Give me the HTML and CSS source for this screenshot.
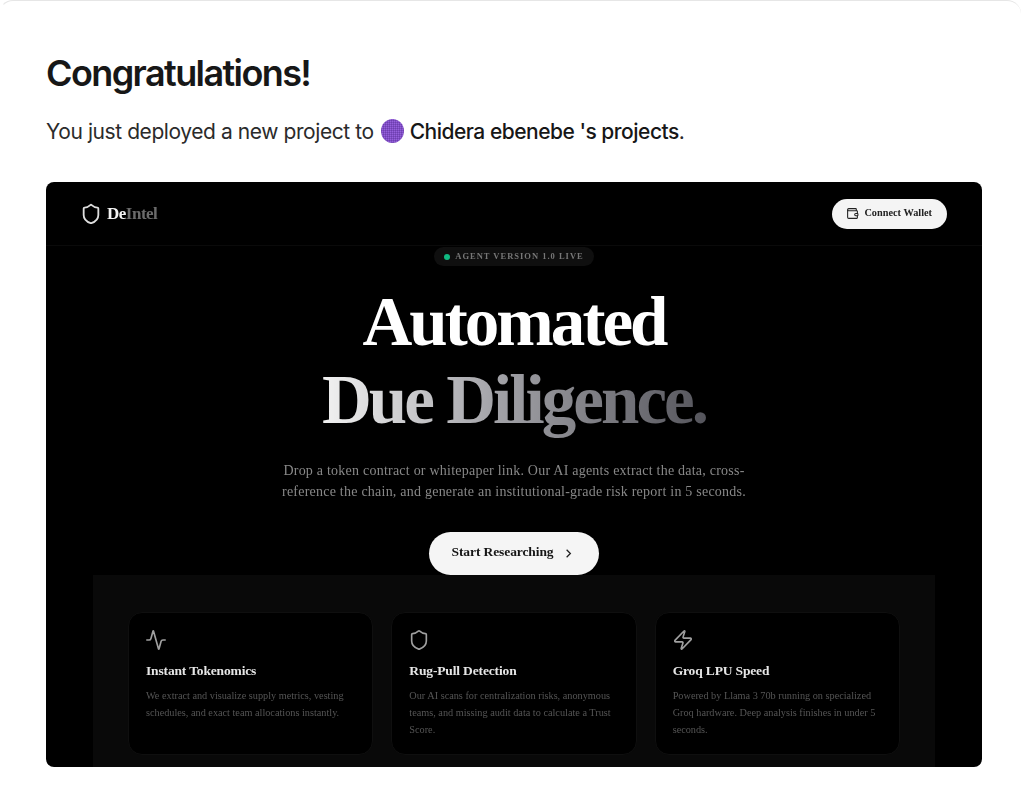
FILE: index.html
```html
<!DOCTYPE html>
<html lang="en">
<head>
  <meta charset="UTF-8">
  <meta name="viewport" content="width=device-width, initial-scale=1.0">
  <title>Congratulations!</title>
  <link rel="stylesheet" href="styles.css">
</head>
<body>
  <div class="panel">
    <h1 class="title">Congratulations!</h1>
    <p class="subtitle">You just deployed a new project to <span class="avatar"></span> <span class="team">Chidera ebenebe 's projects</span>.</p>

    <div class="preview">
      <div class="nav">
        <div class="logo">
          <svg class="logo-icon" viewBox="0 0 24 24"><path d="M20 13c0 5-3.5 7.5-7.66 8.95a1 1 0 0 1-.67-.01C7.5 20.5 4 18 4 13V6a1 1 0 0 1 1-1c2 0 4.5-1.2 6.24-2.72a1.17 1.17 0 0 1 1.52 0C14.51 3.81 17 5 19 5a1 1 0 0 1 1 1z"/></svg>
          <span class="logo-text">De<span class="logo-dim">Intel</span></span>
        </div>
        <div class="wallet-btn">
          <svg class="wallet-icon" viewBox="0 0 24 24"><path d="M19 7V4a1 1 0 0 0-1-1H5a2 2 0 0 0 0 4h15a1 1 0 0 1 1 1v4h-3a2 2 0 0 0 0 4h3a1 1 0 0 0 1-1v-2a1 1 0 0 0-1-1"/><path d="M3 5v14a2 2 0 0 0 2 2h15a1 1 0 0 0 1-1v-4"/></svg>
          <span class="wallet-label">Connect Wallet</span>
        </div>
      </div>

      <div class="hero">
        <div class="badge"><span class="dot"></span><span class="badge-label">AGENT VERSION 1.0 LIVE</span></div>
        <div class="headline">
          <div>Automated</div>
          <div class="gradient">Due Diligence.</div>
        </div>
        <p class="lead">Drop a token contract or whitepaper link. Our AI agents extract the data, cross-<br>reference the chain, and generate an institutional-grade risk report in 5 seconds.</p>
        <div class="start-btn">
          <span class="start-label">Start Researching</span>
          <svg class="chevron" viewBox="0 0 24 24"><path d="m9 18 6-6-6-6"/></svg>
        </div>
      </div>

      <div class="features">
        <div class="card">
          <svg class="card-icon" viewBox="0 0 24 24"><path d="M22 12h-2.48a2 2 0 0 0-1.93 1.46l-2.35 8.36a.25.25 0 0 1-.48 0L9.24 2.18a.25.25 0 0 0-.48 0l-2.35 8.36A2 2 0 0 1 4.49 12H2"/></svg>
          <div class="card-title">Instant Tokenomics</div>
          <div class="card-text">We extract and visualize supply metrics, vesting schedules, and exact team allocations instantly.</div>
        </div>
        <div class="card">
          <svg class="card-icon" viewBox="0 0 24 24"><path d="M20 13c0 5-3.5 7.5-7.66 8.95a1 1 0 0 1-.67-.01C7.5 20.5 4 18 4 13V6a1 1 0 0 1 1-1c2 0 4.5-1.2 6.24-2.72a1.17 1.17 0 0 1 1.52 0C14.51 3.81 17 5 19 5a1 1 0 0 1 1 1z"/></svg>
          <div class="card-title">Rug-Pull Detection</div>
          <div class="card-text">Our AI scans for centralization risks, anonymous teams, and missing audit data to calculate a Trust Score.</div>
        </div>
        <div class="card">
          <svg class="card-icon" viewBox="0 0 24 24"><path d="M4 14a1 1 0 0 1-.78-1.63l9.9-10.2a.5.5 0 0 1 .86.46l-1.92 6.02A1 1 0 0 0 13 10h7a1 1 0 0 1 .78 1.63l-9.9 10.2a.5.5 0 0 1-.86-.46l1.92-6.02A1 1 0 0 0 11 14z"/></svg>
          <div class="card-title">Groq LPU Speed</div>
          <div class="card-text">Powered by Llama 3 70b running on specialized Groq hardware. Deep analysis finishes in under 5 seconds.</div>
        </div>
      </div>
    </div>
  </div>
</body>
</html>
```

FILE: styles.css
```css
html, body {
  margin: 0;
  padding: 0;
  height: 100%;
  background-color: #fff;
  overflow: hidden;
}
.panel {
  height: 785px;
  box-sizing: border-box;
  padding: 50px 39px 0 46px;
  border-top: 1px solid #e6e6e6;
  border-left: 1px solid transparent;
  border-radius: 14px 14px 0 0;
  margin-left: -1px;
  font-family: Inter, "Liberation Sans", sans-serif;
  color: #171717;
}
.title {
  margin: 0;
  font-size: 36px;
  line-height: 44px;
  font-weight: 600;
  letter-spacing: -1.6px;
}
.subtitle {
  display: flex;
  align-items: center;
  gap: 6px;
  margin: 22px 0 0;
  height: 28px;
  font-size: 21px;
  letter-spacing: -0.42px;
  color: #2b2b2b;
}
.avatar {
  width: 23px;
  height: 24px;
  margin-left: 1px;
  border-radius: 50%;
  background-color: #9560dc;
  background-image:
    repeating-linear-gradient(0deg, rgba(60, 20, 120, 0.25) 0 1px, transparent 1px 2px),
    repeating-linear-gradient(90deg, rgba(60, 20, 120, 0.25) 0 1px, transparent 1px 2px);
}
.team {
  font-weight: 500;
  letter-spacing: -0.5px;
  color: #171717;
  margin-right: -6px;
}
.preview {
  margin-top: 37px;
  width: 936px;
  height: 585px;
  border-radius: 8px;
  overflow: hidden;
  background-color: #000;
  font-family: "Liberation Serif", serif;
  filter: blur(0.35px);
}
.nav {
  display: flex;
  justify-content: space-between;
  align-items: center;
  height: 64px;
  box-sizing: border-box;
  padding: 0 35px 0 34px;
  border-bottom: 1px solid #0a0a0a;
}
.logo {
  display: flex;
  align-items: center;
  gap: 5px;
}
.logo-icon {
  width: 22px;
  height: 22px;
  fill: none;
  stroke: #dedede;
  stroke-width: 2;
}
.logo-text {
  font-size: 17px;
  font-weight: bold;
  letter-spacing: -0.5px;
  color: #f2f2f2;
}
.logo-dim {
  color: #6b6b6b;
}
.wallet-btn {
  display: flex;
  align-items: center;
  gap: 5px;
  height: 30px;
  padding: 0 15px 0 14px;
  border-radius: 15px;
  background-color: #f4f4f4;
  font-size: 10.3px;
  font-weight: bold;
  color: #222;
}
.wallet-label {
  margin-bottom: 2px;
}
.wallet-icon {
  width: 13px;
  height: 13px;
  fill: none;
  stroke: #222;
  stroke-width: 2;
}
.hero {
  display: flex;
  flex-direction: column;
  align-items: center;
}
.badge {
  display: flex;
  align-items: center;
  gap: 5px;
  height: 19px;
  margin-top: 1px;
  padding: 0 10px;
  border-radius: 10px;
  background-color: #0f0f0f;
  font-size: 8.5px;
  font-weight: bold;
  letter-spacing: 1px;
  color: #777;
}
.badge-label {
  margin-bottom: 2px;
}
.dot {
  width: 6px;
  height: 6px;
  border-radius: 50%;
  background-color: #10b981;
}
.headline {
  margin-top: 17px;
  font-size: 69px;
  line-height: 78px;
  font-weight: bold;
  letter-spacing: -2.95px;
  text-align: center;
  color: #fff;
}
.gradient {
  background-image: linear-gradient(90deg, #f2f2f2 0%, #a3a3a8 45%, #55555c 100%);
  -webkit-background-clip: text;
  background-clip: text;
  color: transparent;
}
.lead {
  margin: 22px 0 0;
  font-size: 14px;
  line-height: 20.5px;
  letter-spacing: 0.23px;
  text-align: center;
  color: #888;
}
.start-btn {
  display: flex;
  align-items: center;
  gap: 8px;
  height: 43px;
  margin-top: 30px;
  padding: 0 23px;
  border-radius: 22px;
  background-color: #f5f5f5;
  font-size: 13.5px;
  font-weight: bold;
  letter-spacing: -0.1px;
  color: #151515;
}
.start-label {
  margin-bottom: 3px;
}
.chevron {
  width: 15px;
  height: 15px;
  fill: none;
  stroke: #222;
  stroke-width: 2;
}
.features {
  display: grid;
  grid-template-columns: repeat(3, 1fr);
  gap: 18px;
  width: 842px;
  height: 192px;
  box-sizing: border-box;
  margin: 0 auto;
  padding: 37px 35px 12px;
  background-color: #090909;
}
.card {
  padding: 16px 17px;
  border: 1px solid #0f0f0f;
  border-radius: 14px;
  background-color: #000;
}
.card-icon {
  display: block;
  width: 22px;
  height: 22px;
  margin-left: -1px;
  fill: none;
  stroke: #a0a0a0;
  stroke-width: 1.8;
  stroke-linecap: round;
  stroke-linejoin: round;
}
.card-title {
  margin-top: 12px;
  font-size: 13.5px;
  font-weight: bold;
  letter-spacing: -0.15px;
  color: #e6e6e6;
}
.card-text {
  margin-top: 8px;
  font-size: 10.25px;
  line-height: 17px;
  color: #555;
}
```
